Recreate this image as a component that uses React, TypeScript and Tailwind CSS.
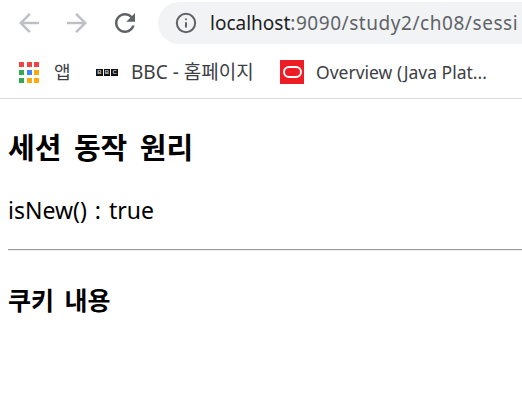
import { Info } from "lucide-react";

const uiFont = "font-['Noto_Sans','Noto_Sans_CJK_KR',sans-serif]";

function AppsIcon() {
  const colors = [
    "bg-[#ef4444]", "bg-[#ef4444]", "bg-[#ef4444]",
    "bg-[#34a853]", "bg-[#4285f4]", "bg-[#fbab09]",
    "bg-[#34a853]", "bg-[#fbab09]", "bg-[#fbab09]",
  ];
  return (
    <div className="grid grid-cols-3 gap-[3px] w-[20px]">
      {colors.map((c, i) => (
        <div key={i} className={`h-[5px] w-[5px] ${c}`} />
      ))}
    </div>
  );
}

function BbcIcon() {
  return (
    <div className="flex gap-[1px] w-[22px]">
      {["B", "B", "C"].map((l, i) => (
        <div key={i} className="flex h-[7px] w-[7px] items-center justify-center bg-[#111] font-['Liberation_Sans',sans-serif] text-[6px] font-bold leading-none text-[#ccc]">
          {l}
        </div>
      ))}
    </div>
  );
}

function OracleIcon() {
  return (
    <div className="flex h-[24px] w-[24px] items-center justify-center bg-[#ee1c25]">
      <div className="h-[12px] w-[19px] rounded-[6px] border-[2px] border-white" />
    </div>
  );
}

function NavIcon({ d, className }: { d: string; className: string }) {
  return (
    <svg viewBox="0 0 24 24" width={30} height={30} fill="currentColor" className={className}>
      <path d={d} />
    </svg>
  );
}

export default function App() {
  return (
    <div className="h-[409px] w-[522px] overflow-hidden bg-white">
      <div className={`flex h-[42px] mt-[2px] items-center ${uiFont}`}>
        <NavIcon className="ml-[14px] shrink-0 text-[#bdc1c6]" d="M20 11H7.83l5.59-5.59L12 4l-8 8 8 8 1.41-1.41L7.83 13H20v-2z" />
        <NavIcon className="ml-[18px] shrink-0 text-[#bdc1c6]" d="M4 11h12.17l-5.59-5.59L12 4l8 8-8 8-1.41-1.41L16.17 13H4v-2z" />
        <NavIcon className="ml-[18px] shrink-0 text-[#5f6368]" d="M17.65 6.35C16.2 4.9 14.21 4 12 4c-4.42 0-7.99 3.58-7.99 8s3.57 8 7.99 8c3.73 0 6.84-2.55 7.73-6h-2.08c-.82 2.33-3.04 4-5.65 4-3.31 0-6-2.69-6-6s2.69-6 6-6c1.66 0 3.14.69 4.22 1.78L13 11h7V4l-2.35 2.35z" />
        <div className="ml-[18px] flex h-[42px] min-w-0 flex-1 items-center overflow-hidden rounded-l-[21px] bg-[#f1f3f4] pl-[17px]">
          <Info className="shrink-0 text-[#5f6368]" size={22} strokeWidth={2.2} />
          <div className="ml-[13px] whitespace-nowrap text-[19px] text-[#202124]">
            localhost<span className="text-[#5f6368] tracking-[0.55px]">:9090/study2/ch08/sessi</span>
          </div>
        </div>
      </div>
      <div className={`mt-[2px] flex h-[53px] items-center border-b border-[#dadce0] text-[#3c4043] ${uiFont}`}>
        <div className="ml-[19px] w-[20px]"><AppsIcon /></div>
        <span className="ml-[15px] w-[16px] text-[18px]">앱</span>
        <div className="ml-[26px] w-[22px]"><BbcIcon /></div>
        <span className="ml-[13px] w-[124px] whitespace-nowrap text-[19px]">BBC - 홈페이지</span>
        <div className="ml-[25px] w-[24px]"><OracleIcon /></div>
        <span className="ml-[12px] whitespace-nowrap text-[17.5px]">Overview (Java Plat...</span>
      </div>
      <div className="pl-[8px] font-['Noto_Sans','Noto_Sans_CJK_KR',sans-serif] text-black">
        <h1 className="mt-[29px] text-[29px] font-bold leading-[40px] [word-spacing:5px]">세션 동작 원리</h1>
        <p className="mt-[28px] text-[23px] leading-[28px] [word-spacing:2px]">isNew() : true</p>
        <hr className="mt-[25px] border-t-[1px] border-b-[1px] border-t-[#9a9a9a] border-b-[#eeeeee]" />
        <h2 className="mt-[33px] text-[25px] font-bold leading-[32px] [word-spacing:4px]">쿠키 내용</h2>
      </div>
    </div>
  );
}
